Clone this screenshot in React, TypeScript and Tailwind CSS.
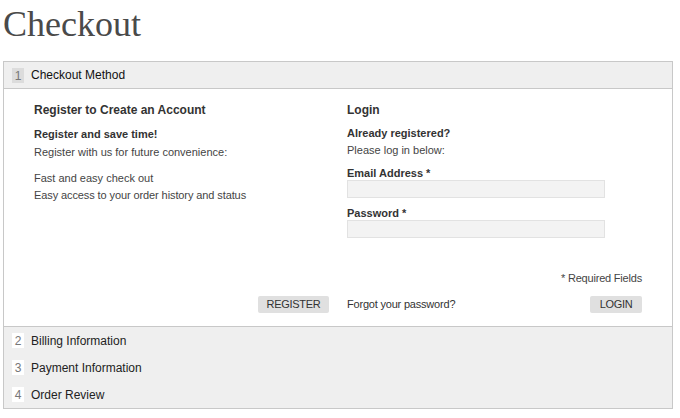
import React from 'react'

const steps = [
  { n: 2, label: 'Billing Information' },
  { n: 3, label: 'Payment Information' },
  { n: 4, label: 'Order Review' },
]

function StepNumber({ n, active }: { n: number; active?: boolean }) {
  return (
    <span
      className={
        'w-[12px] h-[15px] flex items-end justify-center text-[12px] leading-[13px] text-[#777] ' +
        (active ? 'bg-[#dcdcdc]' : 'bg-white')
      }
    >
      {n}
    </span>
  )
}

export default function App() {
  return (
    <div className="w-[680px] h-[418px] bg-white font-['Liberation_Sans',Arial,sans-serif] text-[#333] overflow-hidden">
      <h1 className="pl-[3px] pt-[6px] h-[61px] font-['Liberation_Serif',Times,serif] text-[36px] leading-none text-[#4a4a4a]">
        Checkout
      </h1>

      <div className="ml-[3px] w-[670px] border border-[#c8c8c8]">
        {/* Step 1 header */}
        <div className="h-[27px] bg-[#efefef] border-b border-[#c8c8c8] flex items-center pl-[8px] gap-[7px]">
          <StepNumber n={1} active />
          <span className="text-[12px] text-[#111]">Checkout Method</span>
        </div>

        {/* Step 1 content */}
        <div className="px-[30px] pt-[12px] pb-[13px] border-b border-[#c8c8c8]">
          <div className="grid grid-cols-2 gap-x-[18px]">
            <div className="text-[11px] text-[#444]">
              <h2 className="text-[12px] leading-[18px] font-bold text-[#333]">Register to Create an Account</h2>
              <p className="mt-[6px] leading-[18px] font-bold text-[#333]">Register and save time!</p>
              <p className="leading-[18px]">Register with us for future convenience:</p>
              <p className="mt-[9px] leading-[17px]">Fast and easy check out</p>
              <p className="leading-[17px] tracking-[-0.1px]">Easy access to your order history and status</p>
            </div>

            <div className="text-[11px] text-[#444]">
              <h2 className="text-[12px] leading-[18px] font-bold text-[#333]">Login</h2>
              <p className="mt-[6px] leading-[17px] font-bold text-[#333]">Already registered?</p>
              <p className="leading-[17px]">Please log in below:</p>
              <label className="block mt-[7px] leading-[14px] font-bold text-[#333]">Email Address *</label>
              <input className="block w-[258px] h-[18px] bg-[#f3f3f3] border border-[#e2e2e2]" />
              <label className="block mt-[8px] leading-[14px] font-bold text-[#333]">Password *</label>
              <input type="password" className="block w-[258px] h-[18px] bg-[#f3f3f3] border border-[#e2e2e2]" />
              <p className="mt-[33px] leading-[14px] text-right tracking-[-0.2px]">* Required Fields</p>
            </div>
          </div>

          <div className="grid grid-cols-2 gap-x-[18px] mt-[11px] text-[11px]">
            <div className="flex justify-end">
              <button className="w-[71px] h-[17px] bg-[#e0e0e0] rounded-[2px] text-[11px] leading-[17px] text-[#333] tracking-[-0.3px]">
                REGISTER
              </button>
            </div>
            <div className="flex items-center justify-between">
              <a className="text-[#333] tracking-[-0.2px] leading-[17px]">Forgot your password?</a>
              <button className="w-[52px] h-[17px] bg-[#e0e0e0] rounded-[2px] text-[11px] leading-[17px] text-[#333] tracking-[-0.3px]">
                LOGIN
              </button>
            </div>
          </div>
        </div>

        {/* Remaining steps */}
        <div className="bg-[#efefef]">
          {steps.map(s => (
            <div key={s.n} className="h-[27px] flex items-center pl-[8px] gap-[7px]">
              <StepNumber n={s.n} />
              <span className="text-[12px] text-[#222]">{s.label}</span>
            </div>
          ))}
        </div>
      </div>
    </div>
  )
}
